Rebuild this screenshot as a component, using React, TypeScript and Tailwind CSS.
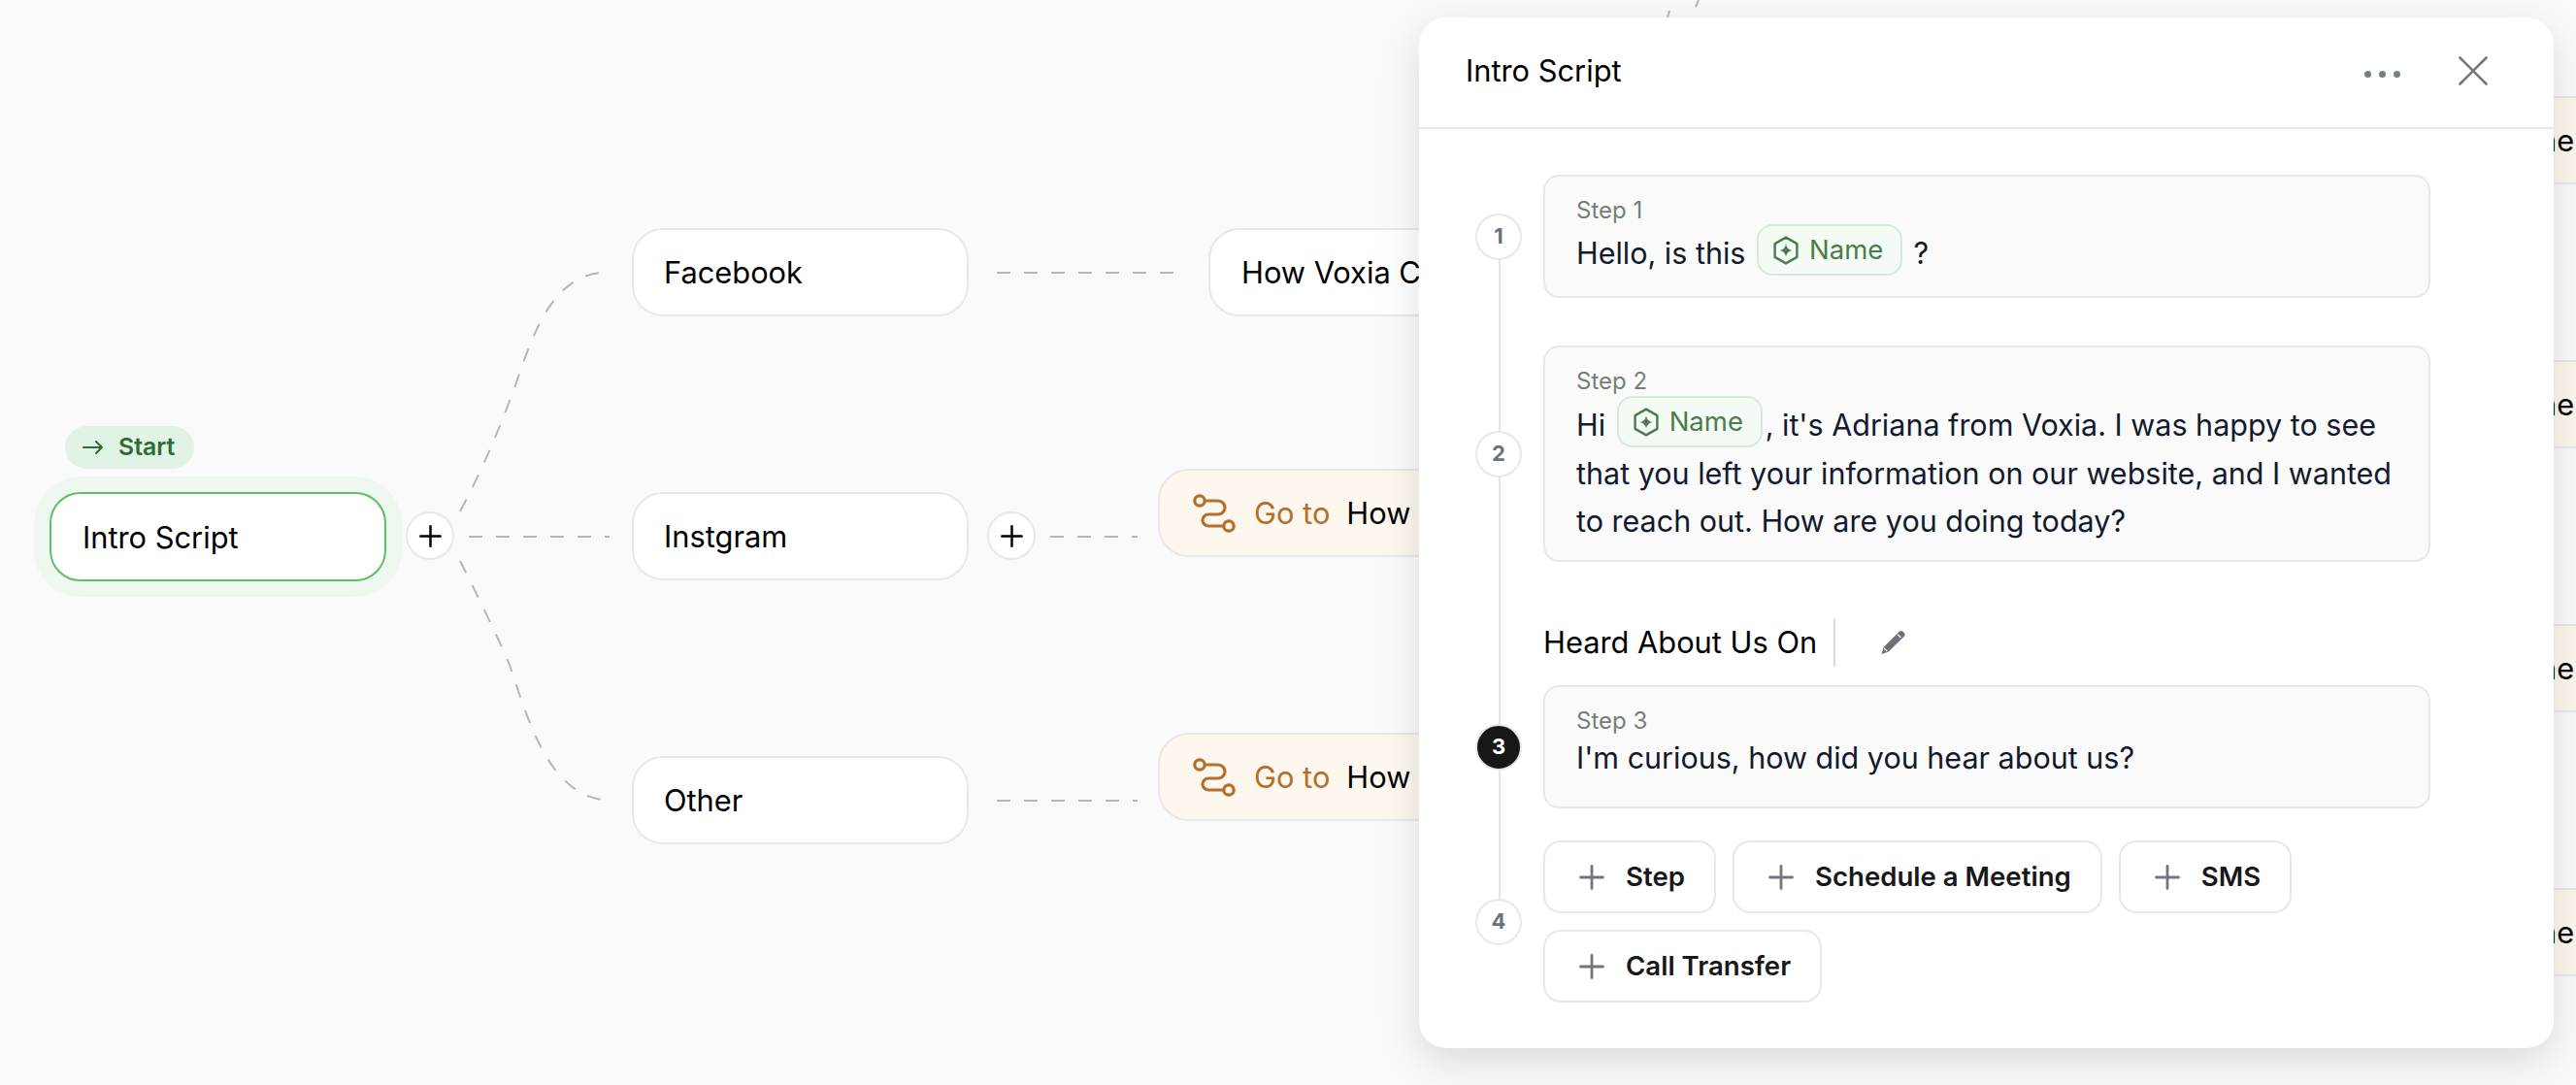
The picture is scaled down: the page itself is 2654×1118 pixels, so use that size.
import { ReactNode } from "react";

function PlusIcon({ className }: { className: string }) {
  return (
    <svg viewBox="0 0 26 26" fill="none" stroke="currentColor" strokeWidth="2.8" strokeLinecap="round" className={className}>
      <path d="M13 1.5v23M1.5 13h23" />
    </svg>
  );
}

function RouteIcon() {
  return (
    <svg width="44" height="40" viewBox="0 0 44 40" fill="none" stroke="#B36F2B" strokeWidth="3.2" className="shrink-0">
      <circle cx="7" cy="7" r="5.2" />
      <circle cx="37" cy="33" r="5.2" />
      <path d="M12.5 7H26a7 7 0 0 1 0 14H16a6 6 0 0 0 0 12H31.5" strokeLinecap="round" />
    </svg>
  );
}

function HexIcon() {
  return (
    <svg width="26" height="30" viewBox="0 0 26 30" fill="none" className="shrink-0">
      <path d="M13 1.6 24.4 8.1v13.8L13 28.4 1.6 21.9V8.1L13 1.6Z" stroke="#4A7C4E" strokeWidth="2.4" strokeLinejoin="round" />
      <path d="M13 8.5q1 5.5 6.500 6.500-5.500 1-6.500 6.500-1-5.500-6.500-6.500 5.500-1 6.500-6.500Z" fill="#4A7C4E" />
    </svg>
  );
}

function PencilIcon() {
  return (
    <svg width="27" height="26" viewBox="0 0 27 26" className="shrink-0">
      <path d="M19.6 2.1a2.8 2.8 0 0 1 4 0l1 1a2.8 2.8 0 0 1 0 4L8.4 22.8 1.6 25l1.9-7L19.6 2.1Z" fill="#6F6F78" />
      <path d="M18 4.6l3.4 3.4" stroke="#fff" strokeWidth="1.2" />
      <path d="M3.8 18.6l3.6 3.5" stroke="#fff" strokeWidth="1.2" />
    </svg>
  );
}

function Node({ className, children }: { className: string; children: ReactNode }) {
  return (
    <div className={`absolute flex h-[91px] w-[346px] items-center rounded-[32px] border-2 border-[#E8E8E8] bg-white pt-[2px] pl-[32px] text-[30.8px] whitespace-nowrap text-black ${className}`}>
      {children}
    </div>
  );
}

function GoToNode({ className, label }: { className: string; label: string }) {
  return (
    <div className={`absolute flex h-[91px] w-[420px] items-center rounded-[32px] border-2 border-[#E8E8E8] bg-[#FEF7ED] pl-[34px] text-[30.8px] whitespace-nowrap ${className}`}>
      <RouteIcon />
      <span className="mt-[2px] ml-[19px] text-[#B36F2B]">Go to</span>
      <span className="mt-[2px] ml-[17px] text-black">{label}</span>
    </div>
  );
}

function AddButton({ className }: { className: string }) {
  return (
    <div className={`absolute flex h-[50px] w-[50px] items-center justify-center rounded-full border-2 border-[#E8E8E8] bg-white text-black ${className}`}>
      <PlusIcon className="h-[23px] w-[23px]" />
    </div>
  );
}

function NameChip() {
  return (
    <span className="relative -top-[6px] mx-[3px] -my-[4px] inline-flex h-[53px] w-[150px] items-center gap-[11px] rounded-[16px] border-2 border-[#D5EBD8] bg-[#F4FBF5] pl-[15px] align-middle text-[#4A7C4E]">
      <HexIcon />
      <span className="text-[27.5px]">Name</span>
    </span>
  );
}

function StepCard({ label, children, bodyClass }: { label: string; children: ReactNode; bodyClass: string }) {
  return (
    <div className="w-[914px] rounded-[16px] border-2 border-[#E8E8E8] bg-[#FAFAFA] px-[32px] pt-[19px]">
      <div className="text-[24px] leading-[32px] text-[#76807A]">{label}</div>
      <div className={`text-[30.5px] leading-[49px] text-[#131A2E] ${bodyClass}`}>{children}</div>
    </div>
  );
}

function StepDot({ n, active }: { n: number; active?: boolean }) {
  return (
    <div
      className={
        active
          ? "relative z-10 flex h-[48px] w-[48px] shrink-0 items-center justify-center rounded-full border-2 border-[#E8E8E8] bg-[#171717] text-[22px] font-bold text-white"
          : "relative z-10 flex h-[48px] w-[48px] shrink-0 items-center justify-center rounded-full border-2 border-[#E8E8E8] bg-white text-[22px] font-bold text-[#6B7280]"
      }
    >
      {n}
    </div>
  );
}

function ActionButton({ label }: { label: string }) {
  return (
    <div className="flex h-[75px] items-center gap-[22px] rounded-[18px] border-2 border-[#E8E8E8] bg-white pr-[30px] pl-[35px] text-[27.6px] font-semibold text-[#18181B]">
      <PlusIcon className="h-[26px] w-[26px] text-[#75757F]" />
      {label}
    </div>
  );
}

function Edges() {
  return (
    <svg width="2654" height="1118" viewBox="0 0 2654 1118" fill="none" stroke="#B5B5BB" strokeWidth="2" className="absolute top-0 left-0">
      <g strokeDasharray="14 14">
        <path d="M474 527C500 478 515 440 530 400C550 340 570 285 620 281" />
        <path d="M474 578C490 610 510 650 525 685C545 745 565 815 620 824" />
        <path d="M483 553H628" />
        <path d="M1027 281H1212" />
        <path d="M1082 553H1172" />
        <path d="M1027 825H1172" />
      </g>
      <path d="M1718 18L1720 11" />
      <path d="M1747 7L1750 0" />
    </svg>
  );
}

export default function App() {
  return (
    <div className="relative h-[1118px] w-[2654px] overflow-hidden bg-[#FAFAFA] font-['Inter',sans-serif]">
      <Edges />

      {/* start node */}
      <div className="absolute top-[439px] left-[67px] flex h-[44px] w-[133px] items-center gap-[16px] rounded-full bg-[#E1F3E4] pl-[18px] text-[24.8px] font-semibold text-[#2E6B35]">
        <svg width="21" height="14" viewBox="0 0 21 14" fill="none" stroke="#2E6B35" strokeWidth="2" strokeLinecap="round" strokeLinejoin="round">
          <path d="M1 7h19M14 1l6 6-6 6" />
        </svg>
        Start
      </div>
      <Node className="top-[507px] left-[51px] !h-[92px] !w-[347px] !border-[#5CBF60] shadow-[0_0_0_16px_#EFF8F0]">Intro Script</Node>
      <AddButton className="top-[527px] left-[418px]" />

      <Node className="top-[235px] left-[651px] !w-[347px] !pl-[31px]">Facebook</Node>
      <Node className="top-[507px] left-[651px] !w-[347px] !pl-[31px]">Instgram</Node>
      <Node className="top-[779px] left-[651px] !w-[347px] !pl-[31px]">Other</Node>
      <AddButton className="top-[527px] left-[1017px]" />

      <Node className="top-[235px] left-[1245px]">How Voxia Can Help</Node>
      <GoToNode className="top-[483px] left-[1193px]" label="How Voxia Can Help" />
      <GoToNode className="top-[755px] left-[1193px]" label="How Voxia Can Help" />

      <GoToNode className="top-[99px] left-[2381px]" label="Done" />
      <GoToNode className="top-[371px] left-[2381px]" label="Done" />
      <GoToNode className="top-[643px] left-[2381px]" label="Done" />
      <GoToNode className="top-[915px] left-[2381px]" label="Done" />

      {/* side panel */}
      <div className="absolute top-[18px] left-[1462px] h-[1062px] w-[1169px] rounded-[28px] bg-white shadow-[0_14px_44px_rgba(0,0,0,0.13)]">
        <div className="flex h-[115px] items-center justify-between border-b-2 border-[#E8E8EA] pr-[68px] pb-[4px] pl-[48px]">
          <div className="mt-[2px] text-[30.8px] text-black">Intro Script</div>
          <div className="flex items-center gap-[60px]">
            <div className="mt-[8px] flex gap-[8px]">
              <span className="h-[7px] w-[7px] rounded-full bg-[#76807A]" />
              <span className="h-[7px] w-[7px] rounded-full bg-[#76807A]" />
              <span className="h-[7px] w-[7px] rounded-full bg-[#76807A]" />
            </div>
            <svg width="30" height="30" viewBox="0 0 30 30" fill="none" stroke="#75757F" strokeWidth="2.6" strokeLinecap="round">
              <path d="M1.5 1.5l27 27M28.5 1.5l-27 27" />
            </svg>
          </div>
        </div>

        <div className="relative pt-[47px] pl-[58px]">
          <div className="absolute top-[100px] left-[82px] h-[720px] w-[2px] bg-[#E5E5E5]" />

          <div className="flex items-center gap-[22px]">
            <StepDot n={1} />
            <StepCard label="Step 1" bodyClass="pt-[3px] pb-[19px]">
              Hello, is this <NameChip /> ?
            </StepCard>
          </div>

          <div className="mt-[49px] flex items-center gap-[22px]">
            <StepDot n={2} />
            <StepCard label="Step 2" bodyClass="pt-[4px] pb-[16px]">
              Hi <NameChip />, it's Adriana from Voxia. I was happy to see that you left your information on our website, and I wanted to reach out. How are you doing today?
            </StepCard>
          </div>

          <div className="mt-[58px] flex h-[50px] items-center pl-[70px] text-[30.8px] text-black">
            <span>Heard About Us On</span>
            <span className="mx-[17px] h-[50px] w-[2px] bg-[#D9D9D9]" />
            <span className="ml-[29px]">
              <PencilIcon />
            </span>
          </div>

          <div className="mt-[19px] flex items-center gap-[22px]">
            <StepDot n={3} active />
            <StepCard label="Step 3" bodyClass="-mt-[3px] pb-[26px]">
              I'm curious, how did you hear about us?
            </StepCard>
          </div>

          <div className="mt-[33px] flex items-center gap-[22px]">
            <StepDot n={4} />
            <div className="flex w-[914px] flex-wrap gap-[17px]">
              <ActionButton label="Step" />
              <ActionButton label="Schedule a Meeting" />
              <ActionButton label="SMS" />
              <ActionButton label="Call Transfer" />
            </div>
          </div>
        </div>
      </div>
    </div>
  );
}
